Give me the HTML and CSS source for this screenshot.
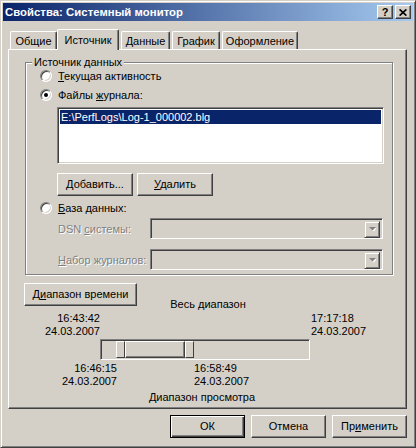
FILE: index.html
```html
<!DOCTYPE html>
<html lang="ru">
<head>
<meta charset="utf-8">
<title>Свойства: Системный монитор</title>
<link rel="stylesheet" href="styles.css">
</head>
<body>
<div class="window">
  <div class="titlebar">
    <span class="title">Свойства: Системный монитор</span>
    <div class="tb-btns">
      <span class="tbb help">?</span>
      <span class="tbb close"><svg width="8" height="7" viewBox="0 0 8 7"><path d="M0.6 0.4 L7.4 6.6 M7.4 0.4 L0.6 6.6" stroke="#000" stroke-width="1.7" fill="none"/></svg></span>
    </div>
  </div>

  <div class="tabs">
    <div class="tab t1">Общие</div>
    <div class="tab sel">Источник</div>
    <div class="tab t3">Данные</div>
    <div class="tab t4">График</div>
    <div class="tab t5">Оформление</div>
  </div>

  <div class="panel">
    <div class="group">
      <div class="group-title">Источник данных</div>
      <div class="radio-row r1"><span class="radio"></span><span><u>Т</u>екущая активность</span></div>
      <div class="radio-row r2"><span class="radio on"></span><span>Файлы <u>ж</u>урнала:</span></div>
      <div class="listbox">
        <div class="item">E:\PerfLogs\Log-1_000002.blg</div>
      </div>
      <div class="btn-row">
        <button class="btn w76"><u>Д</u>обавить...</button>
        <button class="btn w76"><u>У</u>далить</button>
      </div>
      <div class="radio-row r3"><span class="radio"></span><span><u>Б</u>аза данных:</span></div>
      <div class="field-row f1">
        <span class="flabel">DSN <u>с</u>истемы:</span>
        <div class="combo"><span class="drop"><svg width="7" height="5" viewBox="0 0 7 5"><path d="M1 1 H8 L4.5 4.5 Z" fill="#fff"/><path d="M0 0 H7 L3.5 3.5 Z" fill="#808080"/></svg></span></div>
      </div>
      <div class="field-row f2">
        <span class="flabel"><u>Н</u>абор журналов:</span>
        <div class="combo"><span class="drop"><svg width="7" height="5" viewBox="0 0 7 5"><path d="M1 1 H8 L4.5 4.5 Z" fill="#fff"/><path d="M0 0 H7 L3.5 3.5 Z" fill="#808080"/></svg></span></div>
      </div>
    </div>

    <div class="range">
      <button class="btn range-btn">Д<u>и</u>апазон времени</button>
      <div class="range-title">Весь диапазон</div>
      <div class="time t-start">16:43:42<br>24.03.2007</div>
      <div class="time t-end">17:17:18<br>24.03.2007</div>
      <div class="track">
        <span class="thumb" style="left:15px;width:9px"></span>
        <span class="sel-range" style="left:24px;width:60px"></span>
        <span class="thumb" style="left:84px;width:9px"></span>
      </div>
      <div class="view-times">
        <div class="time v-start">16:46:15<br>24.03.2007</div>
        <div class="time v-end">16:58:49<br>24.03.2007</div>
      </div>
      <div class="range-foot">Диапазон просмотра</div>
    </div>
  </div>

  <div class="actions">
    <button class="btn act default">ОК</button>
    <button class="btn act">Отмена</button>
    <button class="btn act">Пр<u>и</u>менить</button>
  </div>
</div>
</body>
</html>
```
FILE: styles.css
```css
html, body {
  margin: 0;
  padding: 0;
  background: #d4d0c8;
}
body {
  font-family: "Liberation Sans", Arial, sans-serif;
  font-size: 11px;
  color: #000;
}
u { text-decoration: underline; text-underline-offset: 1px; }

.window {
  width: 416px;
  height: 448px;
  box-sizing: border-box;
  background: #d4d0c8;
  border: 1px solid;
  border-color: #d4d0c8 #404040 #404040 #d4d0c8;
  box-shadow: inset 1px 1px #fff, inset -1px -1px #808080;
  padding: 2px;
}

/* title bar */
.titlebar {
  height: 18px;
  display: flex;
  align-items: center;
  background: linear-gradient(to right, #0a246a, #a6caf0);
  color: #fff;
  font-weight: bold;
  padding-left: 2px;
}
.title { flex: 1; white-space: nowrap; font-size: 11.3px; letter-spacing: 0.05px; }
.tb-btns { display: flex; gap: 2px; margin-right: 2px; }
.tbb {
  width: 16px;
  height: 14px;
  box-sizing: border-box;
  background: #d4d0c8;
  border: 1px solid;
  border-color: #fff #404040 #404040 #fff;
  box-shadow: inset -1px -1px #808080;
  display: flex;
  align-items: center;
  justify-content: center;
  color: #000;
  font-weight: bold;
  font-size: 11px;
  line-height: 12px;
}
.tbb.help { padding-bottom: 1px; }

/* tabs */
.tabs {
  display: flex;
  align-items: flex-end;
  height: 21px;
  margin: 8px 0 0 7px;
  position: relative;
  z-index: 1;
}
.tab {
  height: 18px;
  margin-bottom: 1px;
  box-sizing: border-box;
  border-left: 1px solid #fff;
  border-top: 1px solid #fff;
  border-right: 1px solid #404040;
  border-radius: 2px 2px 0 0;
  box-shadow: inset -1px 0 #808080;
  display: flex;
  align-items: center;
  justify-content: center;
  padding-top: 1px;
  background: #d4d0c8;
}
.t1 { width: 47px; }
.tab.sel { width: 62px; height: 21px; margin-bottom: 0; padding-bottom: 2px; }
.t3 { width: 49px; margin-left: 2px; }
.t4 { width: 48px; margin-left: 2px; }
.t5 { width: 76px; margin-left: 2px; }

/* panel */
.panel {
  margin: -1px 0 0 5px;
  width: 399px;
  height: 360px;
  box-sizing: border-box;
  border: 1px solid;
  border-color: #fff #404040 #404040 #fff;
  box-shadow: inset -1px -1px #808080;
  overflow: hidden;
}

.group {
  margin: 12px 0 0 16px;
  width: 368px;
  height: 213px;
  box-sizing: border-box;
  border: 1px solid #808080;
  box-shadow: inset 1px 1px #fff, 1px 1px #fff;
}
.group-title {
  width: fit-content;
  margin: -7px 0 0 6px;
  padding: 0 2px;
  line-height: 13px;
  height: 13px;
  background: #d4d0c8;
}

.radio-row {
  display: flex;
  align-items: center;
  gap: 6px;
  height: 14px;
  margin-left: 14px;
}
.r2, .r3 { margin-top: 5px; }
.radio {
  width: 12px;
  height: 12px;
  box-sizing: border-box;
  border-radius: 50%;
  background: #fff;
  border: 1px solid;
  border-color: #808080 #fff #fff #808080;
  box-shadow: inset 1px 1px #404040, inset -1px -1px #d4d0c8;
  display: flex;
  align-items: center;
  justify-content: center;
}
.radio.on::after {
  content: "";
  width: 4px;
  height: 4px;
  border-radius: 50%;
  background: #000;
}

.listbox {
  margin: 5px 0 0 31px;
  width: 327px;
  height: 57px;
  box-sizing: border-box;
  padding: 2px;
  background: #fff;
  border: 1px solid;
  border-color: #808080 #fff #fff #808080;
  box-shadow: inset 1px 1px #404040, inset -1px -1px #d4d0c8;
}
.item {
  height: 14px;
  line-height: 14px;
  padding-left: 1px;
  background: #0a246a;
  color: #fff;
  white-space: nowrap;
}

.btn {
  font: inherit;
  color: #000;
  height: 23px;
  box-sizing: border-box;
  background: #d4d0c8;
  border: 1px solid;
  border-color: #fff #404040 #404040 #fff;
  box-shadow: inset -1px -1px #808080;
  padding: 0;
  margin: 0;
  line-height: 13px;
  white-space: nowrap;
}
.btn-row {
  display: flex;
  gap: 4px;
  margin: 9px 0 0 31px;
}
.w76 { width: 76px; }

.field-row {
  display: flex;
  align-items: center;
  height: 21px;
  margin-left: 32px;
}
.f1 { margin-top: 3px; }
.f2 { margin-top: 10px; }
.flabel {
  width: 92px;
  color: #808080;
  text-shadow: 1px 1px #fff;
  white-space: nowrap;
}
.combo {
  width: 233px;
  height: 21px;
  box-sizing: border-box;
  padding: 2px;
  background: #d4d0c8;
  border: 1px solid;
  border-color: #808080 #fff #fff #808080;
  box-shadow: inset 1px 1px #404040, inset -1px -1px #d4d0c8;
  display: flex;
  justify-content: flex-end;
}
.drop {
  width: 16px;
  height: 17px;
  box-sizing: border-box;
  background: #d4d0c8;
  border: 1px solid;
  border-color: #d4d0c8 #404040 #404040 #d4d0c8;
  box-shadow: inset 1px 1px #fff, inset -1px -1px #808080;
  display: flex;
  align-items: center;
  justify-content: center;
}

/* time range */
.range {
  display: grid;
  grid-template-columns: 76px 210px 1fr;
  grid-template-rows: 28px 28px 21px auto auto;
  margin: 8px 0 0 15px;
  line-height: 13px;
}
.range-btn {
  grid-column: 1 / 3;
  grid-row: 1;
  width: 113px;
  align-self: start;
}
.range-title {
  grid-column: 2;
  grid-row: 1;
  justify-self: center;
  align-self: end;
  margin-left: 6px;
}
.time { white-space: nowrap; }
.t-start {
  grid-column: 1;
  grid-row: 2;
  text-align: right;
  padding-top: 1px;
}
.t-end {
  grid-column: 3;
  grid-row: 2;
  padding: 1px 0 0 1px;
}
.track {
  grid-column: 2;
  grid-row: 3;
  position: relative;
  box-sizing: border-box;
  border: 1px solid;
  border-color: #808080 #fff #fff #808080;
  box-shadow: inset 1px 1px #404040, inset -1px -1px #d4d0c8;
}
.thumb, .sel-range {
  position: absolute;
  top: 1px;
  bottom: 1px;
  box-sizing: border-box;
  background: #d4d0c8;
  border: 1px solid;
  border-color: #fff #404040 #404040 #fff;
}
.sel-range { box-shadow: inset -1px -1px #808080; }
.view-times {
  grid-column: 1 / -1;
  grid-row: 4;
  display: flex;
  margin-top: 2px;
}
.v-start { width: 93px; text-align: right; }
.v-end { margin-left: 77px; }
.range-foot {
  grid-column: 2;
  grid-row: 5;
  justify-self: center;
  margin-top: 3px;
  margin-right: 6px;
}

/* dialog buttons */
.actions {
  display: flex;
  justify-content: flex-end;
  gap: 6px;
  margin: 6px 6px 0 0;
}
.act { width: 75px; }
.btn.default {
  border: 1px solid #000;
  box-shadow: inset 1px 1px #fff, inset -1px -1px #404040, inset -2px -2px #808080;
}
```
